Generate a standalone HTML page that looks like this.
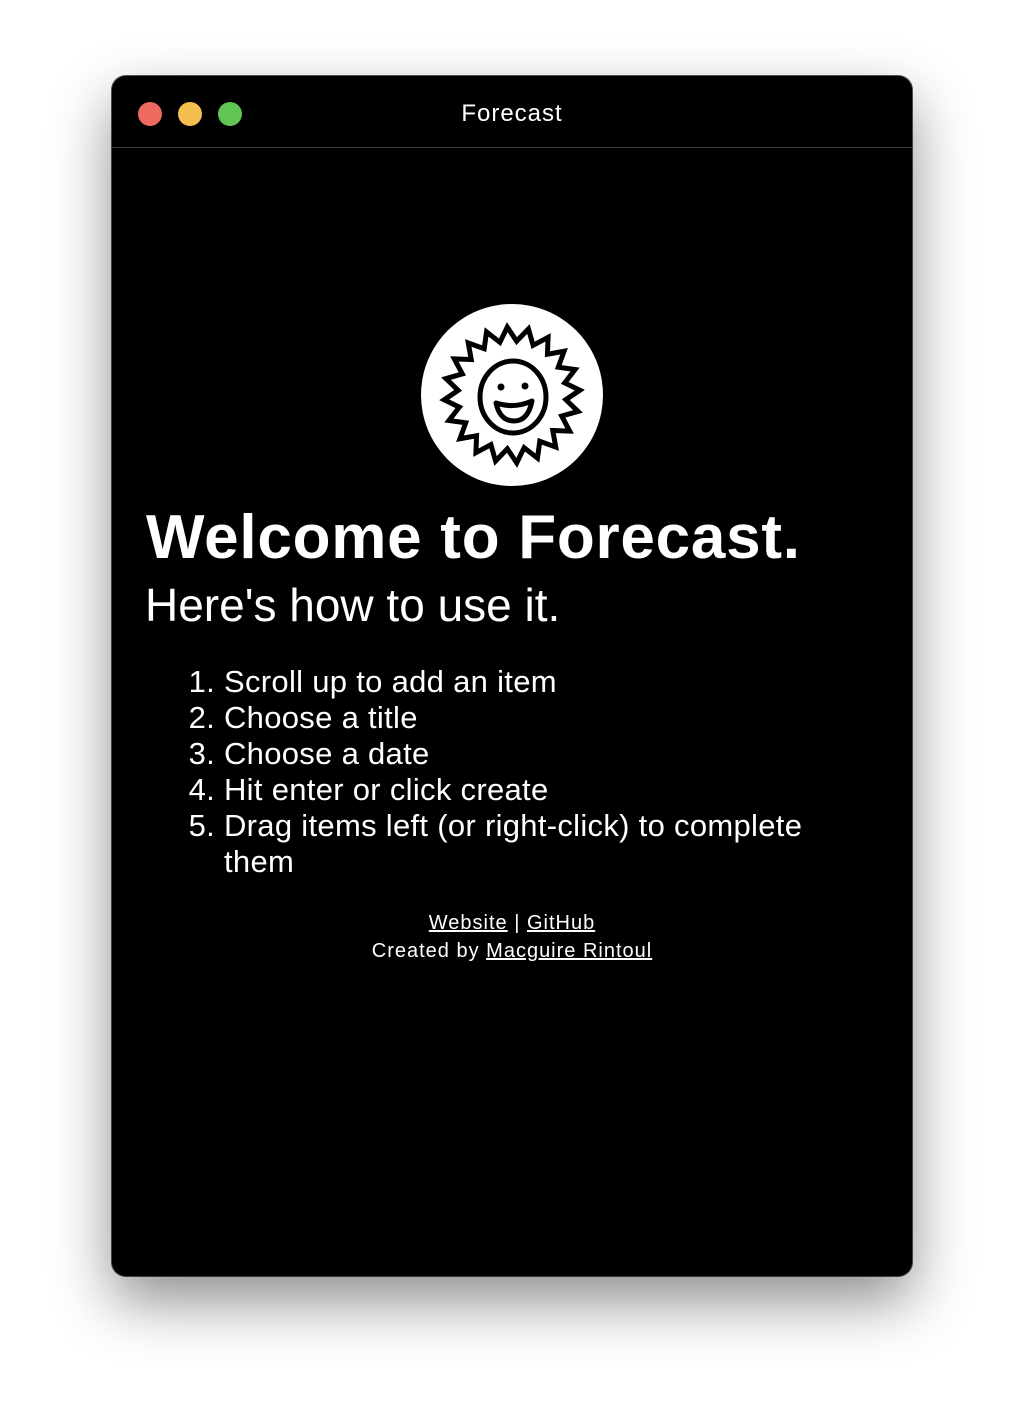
<!DOCTYPE html>
<html><head><meta charset="utf-8"><style>
html,body{margin:0;padding:0;width:1024px;height:1424px;background:#fff;overflow:hidden;font-family:"Liberation Sans",sans-serif}
.win{position:absolute;left:112px;top:76px;width:800px;height:1200px;background:#000;border-radius:14px;box-shadow:0 25px 60px rgba(0,0,0,.45),0 0 0 1px #555;overflow:hidden}
.bar{position:absolute;left:0;top:0;width:800px;height:71px;border-bottom:1px solid #3a3a3a}
.dot{position:absolute;top:26px;width:24px;height:24px;border-radius:50%}
.title{position:absolute;left:0;right:0;top:24px;text-align:center;color:#fff;font-size:24px;letter-spacing:1px}
h1{position:absolute;left:34px;top:426px;margin:0;color:#fff;font-size:62px;font-weight:bold;letter-spacing:.75px;white-space:nowrap}
h2{position:absolute;left:33px;top:502px;margin:0;color:#fff;font-size:46px;font-weight:normal;letter-spacing:0;white-space:nowrap}
ol{position:absolute;left:76px;top:588px;margin:0;padding:0 0 0 36px;color:#fff;font-size:31px;line-height:36px;letter-spacing:.3px;width:600px}
.foot{position:absolute;left:0;right:0;top:833px;text-align:center;color:#fff;font-size:20px;line-height:28px;letter-spacing:1px}
.foot u{text-decoration:underline}
</style></head><body>
<div class="win">
<div class="bar">
<div class="dot" style="left:26px;background:#ec6a5e"></div>
<div class="dot" style="left:66px;background:#f4bf4f"></div>
<div class="dot" style="left:106px;background:#61c554"></div>
<div class="title">Forecast</div>
</div>
<svg style="position:absolute;left:309px;top:228px" width="182" height="182" viewBox="-91 -91 182 182">
<circle r="91" fill="#fff"/>
<polygon fill="none" stroke="#000" stroke-width="5" stroke-linejoin="miter" transform="rotate(-4)" points="68,0 53.4,8.4 64.7,21 48.1,24.5 55,40 38.2,38.2 40,55 24.5,48.1 21,64.7 8.4,53.4 0,68 -8.4,53.4 -21,64.7 -24.5,48.1 -40,55 -38.2,38.2 -55,40 -48.1,24.5 -64.7,21 -53.4,8.4 -68,0 -53.4,-8.4 -64.7,-21 -48.1,-24.5 -55,-40 -38.2,-38.2 -40,-55 -24.5,-48.1 -21,-64.7 -8.4,-53.4 0,-68 8.4,-53.4 21,-64.7 24.5,-48.1 40,-55 38.2,-38.2 55,-40 48.1,-24.5 64.7,-21 53.4,-8.4"/>
<ellipse cx="1" cy="2" rx="33" ry="36" fill="none" stroke="#000" stroke-width="5"/>
<circle cx="-11" cy="-8" r="3.5"/><circle cx="13" cy="-9" r="3.5"/>
<path d="M-16 8 Q2 14 20 6 Q16 26 2 26 Q-12 26 -16 8Z" fill="none" stroke="#000" stroke-width="5" stroke-linejoin="round"/>
</svg>
<h1>Welcome to Forecast.</h1>
<h2>Here's how to use it.</h2>
<ol>
<li>Scroll up to add an item</li>
<li>Choose a title</li>
<li>Choose a date</li>
<li>Hit enter or click create</li>
<li>Drag items left (or right-click) to complete them</li>
</ol>
<div class="foot"><u>Website</u> | <u>GitHub</u><br>Created by <u>Macguire Rintoul</u></div>
</div>
</body></html>
